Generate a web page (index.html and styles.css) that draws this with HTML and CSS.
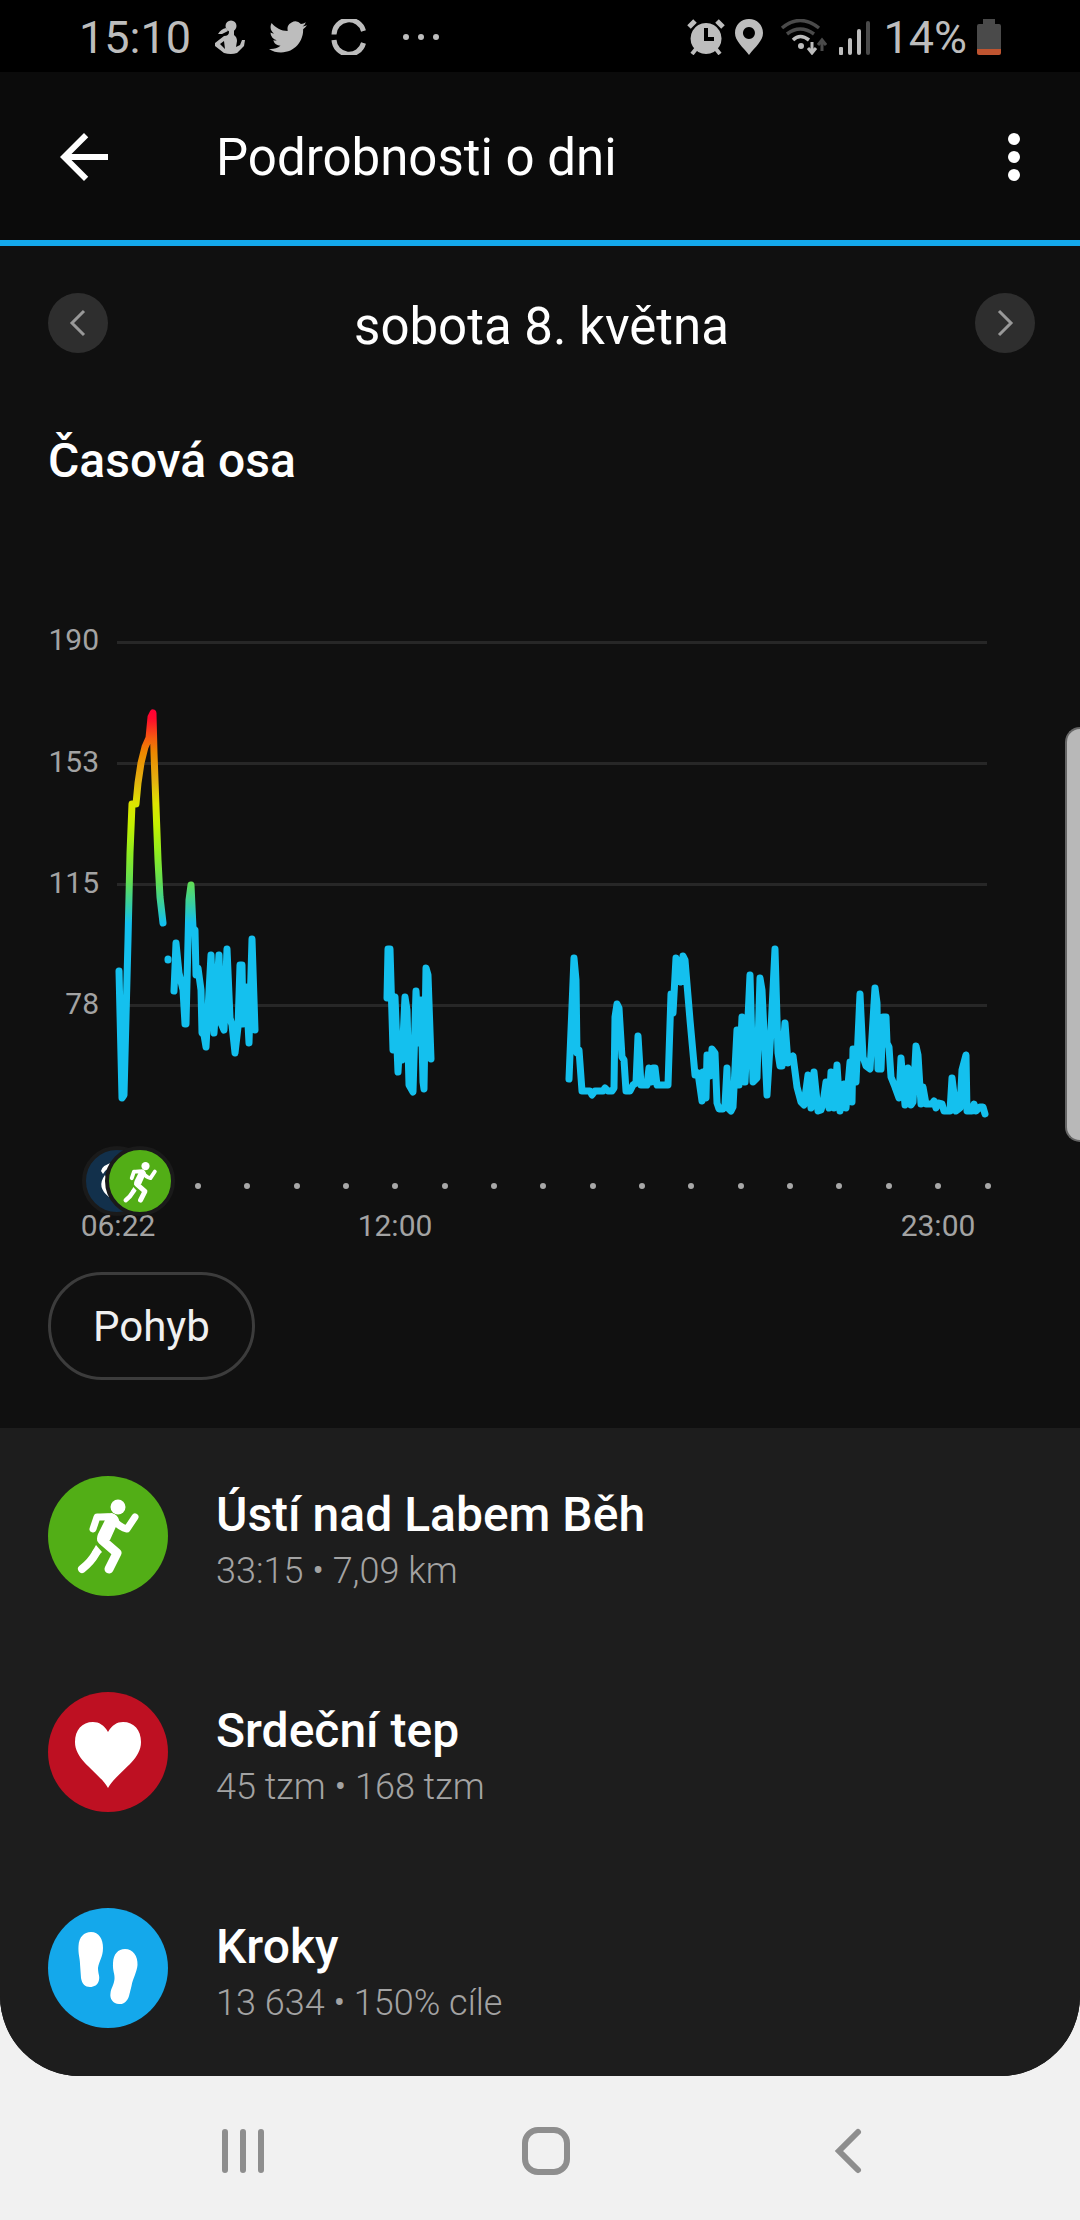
FILE: index.html
```html
<!DOCTYPE html>
<html lang="cs">
<head>
  <meta charset="UTF-8" />
  <meta name="viewport" content="width=device-width, initial-scale=1.0" />
  <title>Podrobnosti o dni</title>
  <link rel="stylesheet" href="styles.css">
</head>
<body>

<!-- shared icons -->
<svg class="sprite" aria-hidden="true">
  <symbol id="runner" viewBox="0 0 120 120">
    <circle cx="70" cy="31" r="7.5" fill="#fff"/>
    <path d="M52 38 L64 37 Q70 39 71 44 L62 64 L50 66 Q48 63 50 58 L57 44 Z" fill="#fff"/>
    <g fill="none" stroke="#fff" stroke-linecap="round" stroke-linejoin="round">
      <path d="M60 41 L49 41 L45 53" stroke-width="7"/>
      <path d="M65 42 Q70 51 79 53 L87 41" stroke-width="7"/>
      <path d="M54 64 L69 77 L61 93" stroke-width="9"/>
      <path d="M34 93 Q43 86 48 77" stroke-width="8"/>
    </g>
    <path d="M48 69 L54 76 L50 80 L44 76 Z" fill="#fff"/>
  </symbol>
</svg>

<div class="status-bar">
  <div class="status-left">
    <span>15:10</span>
    <svg width="30" height="36" viewBox="0 0 30 36" fill="#bdbdbd">
      <circle cx="16" cy="7" r="5.5"/>
      <path d="M11 9 L13 12 L7 15 L3 15 Q6 10 11 9Z"/>
      <path d="M14 10 L19 10 L19 16 Q22 18 22 22 L21 28 L25 26 L27 21 L30 21 L29 27 L22 34 Q16 36 9 34 L0 27 L0 24 L9 17 Q14 17 14 13 Z M9 22 L5 25 L10 30 Z" fill-rule="evenodd"/>
    </svg>
    <svg width="38" height="38" viewBox="0 0 24 24" fill="#bdbdbd">
      <path d="M23.953 4.57a10 10 0 01-2.825.775 4.958 4.958 0 002.163-2.723c-.951.555-2.005.959-3.127 1.184a4.92 4.92 0 00-8.384 4.482C7.69 8.095 4.067 6.13 1.64 3.162a4.822 4.822 0 00-.666 2.475c0 1.71.87 3.213 2.188 4.096a4.904 4.904 0 01-2.228-.616v.06a4.923 4.923 0 003.946 4.827 4.996 4.996 0 01-2.212.085 4.936 4.936 0 004.604 3.417 9.867 9.867 0 01-6.102 2.105c-.39 0-.779-.023-1.17-.067a13.995 13.995 0 007.557 2.209c9.053 0 13.998-7.496 13.998-13.985 0-.21 0-.42-.015-.63A9.935 9.935 0 0024 4.59z"/>
    </svg>
    <svg width="36" height="36" viewBox="0 0 36 36" fill="none" stroke="#bdbdbd" stroke-width="5">
      <path d="M3 15.500 A15 15 0 0 1 32.500 12"/>
      <path d="M3 21 A15 15 0 0 0 32.500 24"/>
    </svg>
    <svg width="60" height="36" viewBox="0 0 60 36" fill="#bdbdbd">
      <circle cx="15" cy="18" r="3"/><circle cx="30" cy="18" r="3"/><circle cx="45" cy="18" r="3"/>
    </svg>
  </div>
  <div class="status-right">
    <svg width="38" height="36" viewBox="0 0 38 36" fill="#bdbdbd">
      <path d="M19 4 a15.500 15.500 0 1 0 .1 0Z M17 9 h4 v9 h6 v4 h-10Z" fill-rule="evenodd"/>
      <path d="M2 8 L8 2 M30 2 L36 8" stroke="#bdbdbd" stroke-width="5"/>
      <path d="M9 30 L5 35 M29 30 L33 35" stroke="#bdbdbd" stroke-width="4"/>
    </svg>
    <svg width="28" height="36" viewBox="0 0 28 36">
      <path d="M14 0 C6 0 0 6 0 14 C0 22 8 28 14 36 C20 28 28 22 28 14 C28 6 22 0 14 0Z M14 8 a6 6 0 1 1 -.1 0Z" fill="#bdbdbd" fill-rule="evenodd"/>
    </svg>
    <svg width="54" height="36" viewBox="0 0 54 36" fill="none">
      <path d="M9 9 Q27 -6 46 9 M14 15 Q27 5 41 15" stroke="#4a4a4a" stroke-width="3.500"/>
      <path d="M20 21 Q27 14 36 21" stroke="#bdbdbd" stroke-width="3.500"/>
      <circle cx="28" cy="27" r="3" fill="#bdbdbd"/>
      <path d="M39 23 V34 M35 29 L39 34 L43 29" stroke="#bdbdbd" stroke-width="3"/>
      <path d="M49 32 V21 M45 26 L49 21 L53 26" stroke="#4a4a4a" stroke-width="3"/>
    </svg>
    <svg width="36" height="36" viewBox="0 0 36 36">
      <g fill="#bdbdbd">
        <rect x="2" y="28" width="4" height="8" rx="1"/>
        <rect x="11" y="19" width="4" height="17" rx="2"/>
        <rect x="20" y="10" width="4" height="26" rx="2"/>
      </g>
      <rect x="29" y="2" width="4" height="34" rx="2" fill="#4a4a4a"/>
    </svg>
    <span>14%</span>
    <svg width="24" height="36" viewBox="0 0 24 36">
      <path d="M6 0 H18 V5 H22 Q24 5 24 7 V30 H0 V7 Q0 5 2 5 H6 Z" fill="#4a4a4a"/>
      <path d="M0 30 H24 V34 Q24 36 22 36 H2 Q0 36 0 34Z" fill="#bf5430"/>
    </svg>
  </div>
</div>

<div class="screen">
  <header class="app-bar">
    <button class="icon-btn" aria-label="Zpět">
      <svg width="72" height="72" viewBox="0 0 24 24" fill="#fff">
        <path d="M20 11H7.830l5.590-5.590L12 4l-8 8 8 8 1.410-1.410L7.830 13H20v-2z"/>
      </svg>
    </button>
    <h1>Podrobnosti o dni</h1>
    <button class="icon-btn" aria-label="Další možnosti">
      <svg width="72" height="72" viewBox="0 0 24 24" fill="#fff">
        <circle cx="12" cy="6" r="2"/><circle cx="12" cy="12" r="2"/><circle cx="12" cy="18" r="2"/>
      </svg>
    </button>
  </header>

  <main>
    <section class="day">
      <div class="date-row">
        <button class="round-btn" aria-label="Předchozí den">
          <svg width="60" height="60" viewBox="0 0 60 60"><path d="M36 18 L24 30 L36 42"/></svg>
        </button>
        <p>sobota 8. května</p>
        <button class="round-btn" aria-label="Následující den">
          <svg width="60" height="60" viewBox="0 0 60 60"><path d="M24 18 L36 30 L24 42"/></svg>
        </button>
      </div>

      <h2>Časová osa</h2>

      <svg class="chart" viewBox="0 0 1080 648" role="img" aria-label="Srdeční tep během dne">
        <defs>
          <linearGradient id="zones" gradientUnits="userSpaceOnUse" x1="0" y1="110" x2="0" y2="323">
            <stop offset="0" stop-color="#ff0035"/>
            <stop offset="0.04" stop-color="#ff0a2c"/>
            <stop offset="0.13" stop-color="#f65a10"/>
            <stop offset="0.2" stop-color="#ec8800"/>
            <stop offset="0.33" stop-color="#e3b010"/>
            <stop offset="0.44" stop-color="#dde400"/>
            <stop offset="0.54" stop-color="#c4f000"/>
            <stop offset="0.67" stop-color="#90ec20"/>
            <stop offset="0.81" stop-color="#60dd55"/>
            <stop offset="0.91" stop-color="#38cfa0"/>
            <stop offset="1" stop-color="#14c0ee"/>
          </linearGradient>
        </defs>

        <!-- grid -->
        <g class="grid">
          <path d="M117 42.500 H987 M117 163.500 H987 M117 284.500 H987 M117 405.500 H987"/>
        </g>
        <g class="axis axis-y">
          <text x="99" y="50">190</text>
          <text x="99" y="172">153</text>
          <text x="99" y="293">115</text>
          <text x="99" y="414">78</text>
        </g>

        <!-- heart rate -->
        <g class="pulse">
          <polyline points="119,371 122,498 124,495 128,340 130,253 132,204 136,204 138,183 141,163 145,147 149,138 151,117 153,113 154,153 156,207 158,260 160,297 163,323"/>
          <polyline points="168,359 168,360"/>
          <polyline points="174,391 176,343 179,373 183,390 185,424 186,424 189,300 191,285 193,328 195,330 196,375 198,368 201,390 202,433 204,435 206,447 211,355 214,433 219,355 221,423 224,430 227,349 230,418 232,425 235,453 238,427 240,365 242,365 243,424 246,387 249,443 252,339 255,430"/>
          <polyline points="387,398 388,349 390,349 393,450 395,397 398,472 400,437 402,460 405,397 407,410 409,485 413,492 416,391 419,443 421,400 423,482 424,489 426,368 428,375 431,459"/>
          <polyline points="569,479 574,358 576,380 577,453 579,450 582,491 590,491 592,495 595,491 603,491 605,488 608,491 612,491 614,488 615,417 617,404 619,408 622,457 624,460 626,491 630,491 633,485 636,483 638,436 641,485 647,485 649,468 651,482 653,468 655,468 657,485 668,485 671,394 673,413 676,358 681,382 683,356 685,360 690,420 695,475 698,473 702,501 703,472 706,498 707,455 710,476 712,449 715,453 717,503 719,509 723,509 725,505 727,468 728,508 731,511 733,507 737,430 739,485 742,417 745,482 750,375 753,482 757,478 760,378 762,390 767,495 771,430 775,349 778,453 780,466 782,466 785,423 788,463 793,456 797,487 801,502 804,505 808,475 811,508 814,472 818,511 821,510 823,503 826,482 829,508 831,472 834,508 837,465 840,511 844,484 846,508 850,462 852,502 853,449 856,482 860,394 863,457 866,466 870,469 875,388 877,403 878,469 881,469 883,417 886,417 887,443 889,447 891,477 895,487 899,498 901,458 905,505 908,468 911,505 913,502 916,446 918,455 921,504 923,487 926,504 932,504 934,501 936,508 938,503 942,504 944,511 950,511 952,478 956,511 960,508 962,470 966,455 967,511 972,511 974,504 976,511 980,507 983,507 985,514"/>
        </g>

        <!-- hours -->
        <path class="hours" d="M198 586h0 M247 586h0 M297 586h0 M346 586h0 M395 586h0 M445 586h0 M494 586h0 M543 586h0 M593 586h0 M642 586h0 M691 586h0 M741 586h0 M790 586h0 M839 586h0 M889 586h0 M938 586h0 M988 586h0"/>
        <g class="axis axis-x">
          <text x="118" y="636">06:22</text>
          <text x="395" y="636">12:00</text>
          <text x="938" y="636">23:00</text>
        </g>

        <!-- sleep and run events -->
        <circle class="event" cx="117" cy="581" r="33" fill="#12304b"/>
        <path d="M114 562 Q102 565 101 571 L103 574 Q106 568 114 566Z" fill="#fff"/>
        <path d="M105 575 Q96 587 109 597 L112 590 Q104 585 106 577Z" fill="#fff"/>
        <circle class="event" cx="140" cy="581" r="33" fill="#52ae16"/>
        <use href="#runner" x="107" y="549" width="66" height="66"/>
      </svg>

      <button class="chip">Pohyb</button>
    </section>

    <ul class="stats">
      <li>
        <svg width="120" height="120" viewBox="0 0 120 120">
          <circle cx="60" cy="60" r="60" fill="#52ae16"/>
          <use href="#runner" width="120" height="120"/>
        </svg>
        <div>
          <h3>Ústí nad Labem Běh</h3>
          <p>33:15 • 7,09 km</p>
        </div>
      </li>
      <li>
        <svg width="120" height="120" viewBox="0 0 120 120">
          <circle cx="60" cy="60" r="60" fill="#be1022"/>
          <path d="M60 40 C56 33 51 30 45 30 C34 30 27 38 27 50 C27 69 50 79 60 96 C70 79 93 69 93 50 C93 38 86 30 75 30 C69 30 64 33 60 40Z" fill="#fff"/>
        </svg>
        <div>
          <h3>Srdeční tep</h3>
          <p>45 tzm • 168 tzm</p>
        </div>
      </li>
      <li>
        <svg width="120" height="120" viewBox="0 0 120 120">
          <circle cx="60" cy="60" r="60" fill="#14a8eb"/>
          <path d="M43 24 C51 24 55 31 55 40 C55 49 51 53 50 60 C50 66 52 68 51 72 C50 77 46 79 42 79 C37 79 34 76 33 70 L32 56 C32 50 30 46 30.500 38 C31 29 36 24 43 24Z" fill="#fff"/>
          <path d="M77 41 C85 41 90 48 89.500 57 C89 64 85 70 83.500 78 L81 88 C79.500 93 76 96.500 71 96 C65 95.500 61.500 91 62.500 85 C63 80 66 77 66.500 71 C67 66 64.500 63 65 55 C65.500 46 70 41 77 41Z" fill="#fff"/>
        </svg>
        <div>
          <h3>Kroky</h3>
          <p>13 634 • 150% cíle</p>
        </div>
      </li>
    </ul>
  </main>
</div>

<div class="edge-handle"></div>

<nav class="nav-bar">
  <button aria-label="Poslední aplikace">
    <svg width="48" height="48" viewBox="0 0 48 48"><path d="M6 5 V43 M24 5 V43 M42 5 V43" stroke-linecap="round"/></svg>
  </button>
  <button aria-label="Domů">
    <svg width="48" height="48" viewBox="0 0 48 48"><rect x="3" y="3" width="42" height="42" rx="13"/></svg>
  </button>
  <button aria-label="Zpět">
    <svg width="48" height="48" viewBox="0 0 48 48"><path d="M33 5 L14 24 L33 43" stroke-linecap="round"/></svg>
  </button>
</nav>

</body>
</html>
```
FILE: styles.css
```css
* {
  box-sizing: border-box;
}

body {
  margin: 0;
  position: relative;
  background: #f1f1f1;
  color: #fff;
  font-family: Roboto, sans-serif;
}

h1, h2, h3, p, ul {
  margin: 0;
  padding: 0;
}

svg {
  display: block;
  flex-shrink: 0;
}

button {
  padding: 0;
  border: none;
  background: none;
  color: inherit;
  font-family: inherit;
  cursor: pointer;
}

.sprite {
  position: absolute;
  width: 0;
  height: 0;
}

/* status bar */
.status-bar {
  display: flex;
  justify-content: space-between;
  align-items: center;
  height: 72px;
  padding: 2px 79px 0;
  background: #000;
  color: #bdbdbd;
  font-size: 45px;
}

.status-left,
.status-right {
  display: flex;
  align-items: center;
}

.status-left {
  gap: 24px;
}

.status-right {
  gap: 10px;
}

/* app */
.screen {
  background: #101010;
  border-radius: 0 0 80px 80px;
  overflow: hidden;
}

.app-bar {
  display: flex;
  align-items: center;
  height: 174px;
  padding: 2px 30px 0 48px;
  background: #0b0b0b;
  border-bottom: 6px solid #14a8eb;
}

.app-bar h1 {
  flex: 1;
  padding-left: 96px;
  font-size: 51px;
  font-weight: 400;
}

.day {
  padding: 47px 0 48px;
}

.date-row {
  display: flex;
  justify-content: space-between;
  padding: 0 45px 0 48px;
}

.date-row p {
  font-size: 51px;
  line-height: 68px;
}

.round-btn {
  width: 60px;
  height: 60px;
  border-radius: 50%;
  background: #2e2e2e;
}

.round-btn path {
  fill: none;
  stroke: #999;
  stroke-width: 3;
}

.day h2 {
  margin: 72px 48px 111px;
  font-size: 48px;
  font-weight: 500;
  line-height: 56px;
}

/* chart */
.chart {
  width: 100%;
  height: auto;
}

.grid {
  stroke: #272727;
  stroke-width: 3;
}

.axis {
  fill: #a3a3a3;
  font-size: 30px;
}

.axis-y {
  text-anchor: end;
}

.axis-x {
  text-anchor: middle;
}

.pulse {
  fill: none;
  stroke: url(#zones);
  stroke-width: 7;
  stroke-linecap: round;
  stroke-linejoin: round;
}

.hours {
  stroke: #a8a8a8;
  stroke-width: 6;
  stroke-linecap: round;
}

.event {
  stroke: #1a1a1a;
  stroke-width: 4;
}

.chip {
  display: block;
  height: 108px;
  margin: 24px 48px 0;
  padding: 0 42px;
  border: 3px solid #3c3c3c;
  border-radius: 54px;
  color: #f0f0f0;
  font-size: 42px;
}

/* daily stats */
.stats {
  list-style: none;
  background: #1d1d1d;
}

.stats li {
  display: flex;
  gap: 48px;
  padding: 48px;
}

.stats li div {
  display: flex;
  flex-direction: column;
  gap: 4px;
  padding-top: 11px;
}

.stats h3 {
  font-size: 48px;
  font-weight: 500;
  line-height: 56px;
}

.stats p {
  color: #a3a3a3;
  font-size: 36px;
  font-weight: 300;
  line-height: 48px;
}

/* edge panel handle, floats over the page */
.edge-handle {
  position: absolute;
  top: 727px;
  right: 0;
  width: 15px;
  height: 415px;
  background: #b8b8b8;
  border: 2px solid #666;
  border-right: none;
  border-radius: 16px 0 0 16px;
}

/* system navigation */
.nav-bar {
  display: flex;
  height: 144px;
  padding: 6px 80px 0 92px;
}

.nav-bar button {
  display: flex;
  flex: 1;
  justify-content: center;
  align-items: center;
}

.nav-bar svg {
  fill: none;
  stroke: #8e8e8e;
  stroke-width: 6;
}
```
